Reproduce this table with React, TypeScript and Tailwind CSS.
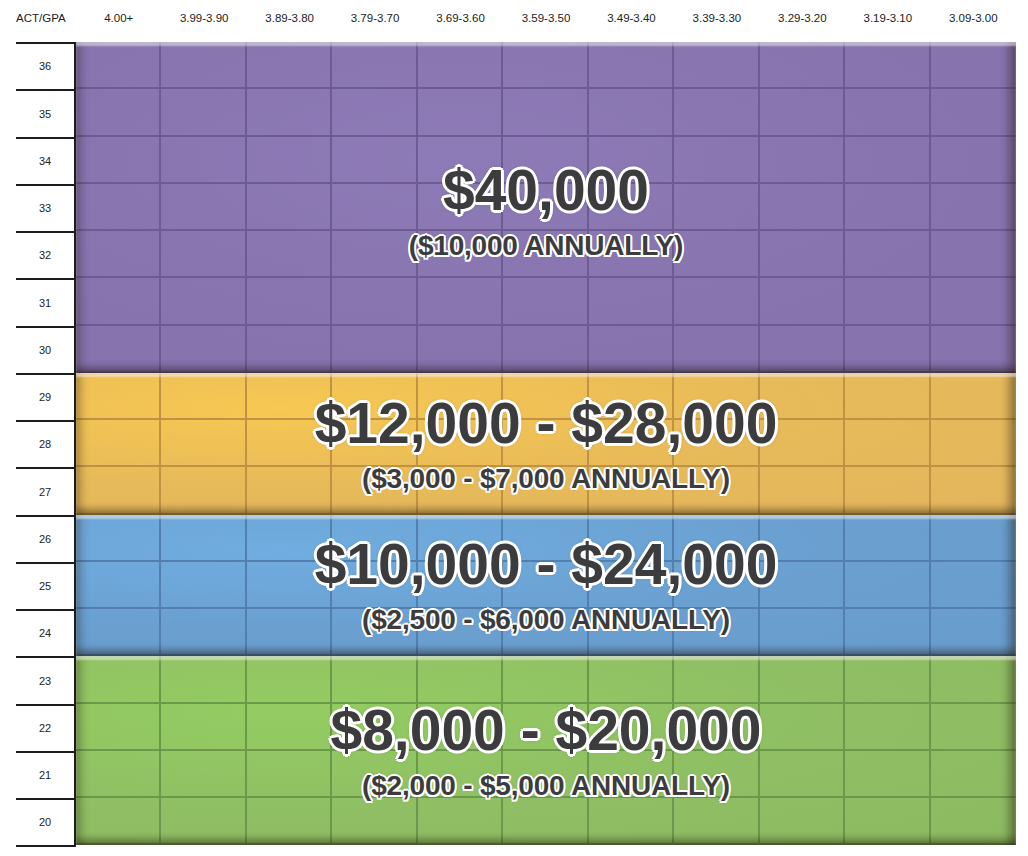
import React from "react";

const gpaCols = [
  "4.00+",
  "3.99-3.90",
  "3.89-3.80",
  "3.79-3.70",
  "3.69-3.60",
  "3.59-3.50",
  "3.49-3.40",
  "3.39-3.30",
  "3.29-3.20",
  "3.19-3.10",
  "3.09-3.00",
];

type Band = {
  acts: number[];
  amount: string;
  annual: string;
  fill: string;
  line: string;
  textPad: string;
};

const bands: Band[] = [
  {
    acts: [36, 35, 34, 33, 32, 31, 30],
    amount: "$40,000",
    annual: "($10,000 ANNUALLY)",
    fill: "bg-[radial-gradient(ellipse_at_40%_35%,#8d7bb7,#8773ad_70%)]",
    line: "border-[#6c5c92]",
    textPad: "pt-[8px]",
  },
  {
    acts: [29, 28, 27],
    amount: "$12,000 - $28,000",
    annual: "($3,000 - $7,000 ANNUALLY)",
    fill: "bg-[radial-gradient(ellipse_at_22%_25%,#f7c852,#e6b95a_55%,#e3b65e)]",
    line: "border-[#bf9343]",
    textPad: "",
  },
  {
    acts: [26, 25, 24],
    amount: "$10,000 - $24,000",
    annual: "($2,500 - $6,000 ANNUALLY)",
    fill: "bg-[radial-gradient(ellipse_at_22%_25%,#71ade0,#6a9fd0_55%,#689ccc)]",
    line: "border-[#527fad]",
    textPad: "",
  },
  {
    acts: [23, 22, 21, 20],
    amount: "$8,000 - $20,000",
    annual: "($2,000 - $5,000 ANNUALLY)",
    fill: "bg-[radial-gradient(ellipse_at_22%_30%,#94cc62,#8fbe64_55%,#8cba62)]",
    line: "border-[#6c984a]",
    textPad: "",
  },
];

function BandBlock({ band }: { band: Band }) {
  return (
    <div className={`grid ${band.fill}`}>
      {/* grid cells */}
      <div className="[grid-area:1/1] grid grid-cols-11">
        {band.acts.map((act) =>
          gpaCols.map((g, i) => (
            <div
              key={`${act}-${g}`}
              className={`h-[47.25px] border-b-2 ${
                i < 10 ? "border-r-2" : ""
              } ${band.line}`}
            />
          ))
        )}
      </div>
      {/* bevel */}
      <div className="[grid-area:1/1] pointer-events-none shadow-[inset_0_4px_2px_rgba(255,255,255,0.5),inset_9px_0_8px_-4px_rgba(30,20,10,0.3),inset_-11px_0_9px_-4px_rgba(30,20,10,0.4),inset_0_-9px_7px_-3px_rgba(30,20,10,0.4)]" />
      {/* award text */}
      <div
        className={`[grid-area:1/1] flex flex-col items-center justify-center text-[#3c3c3e] font-bold ${band.textPad}`}
      >
        <div className="text-[57px] leading-none [text-shadow:3px_0_0_#fff,-3px_0_0_#fff,0_3px_0_#fff,0_-3px_0_#fff,2px_2px_0_#fff,-2px_2px_0_#fff,2px_-2px_0_#fff,-2px_-2px_0_#fff,0_0_5px_rgba(0,0,0,0.35)]">
          {band.amount}
        </div>
        <div className="mt-[13px] text-[28px] leading-none tracking-[-0.2px] [text-shadow:2px_0_0_#fff,-2px_0_0_#fff,0_2px_0_#fff,0_-2px_0_#fff,1.5px_1.5px_0_#fff,-1.5px_1.5px_0_#fff,1.5px_-1.5px_0_#fff,-1.5px_-1.5px_0_#fff,0_0_3px_rgba(0,0,40,0.5)]">
          {band.annual}
        </div>
      </div>
    </div>
  );
}

export default function App() {
  const acts = bands.flatMap((b) => b.acts);

  return (
    <div className="w-[1028px] h-[856px] bg-white pl-[16px] font-['Liberation_Sans',Arial,sans-serif] text-[#222]">
      {/* header */}
      <div className="flex h-[42px] items-center pb-[4px] text-[11.5px]">
        <div className="w-[60px]">ACT/GPA</div>
        <div className="grid w-[940px] grid-cols-11 text-center">
          {gpaCols.map((g) => (
            <div key={g}>{g}</div>
          ))}
        </div>
      </div>

      {/* body */}
      <div className="flex">
        <div className="w-[60px] border-r-2 border-t-2 border-[#1c1c1c] bg-white">
          {acts.map((a) => (
            <div
              key={a}
              className="flex h-[47.25px] items-center justify-center border-b-2 border-[#1c1c1c] text-[11px]"
            >
              {a}
            </div>
          ))}
        </div>
        <div className="flex w-[940px] flex-col">
          {bands.map((b) => (
            <BandBlock key={b.amount} band={b} />
          ))}
        </div>
      </div>
    </div>
  );
}
